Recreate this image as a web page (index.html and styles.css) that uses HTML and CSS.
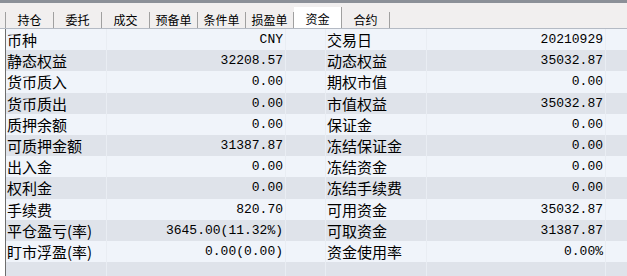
FILE: index.html
```html
<!DOCTYPE html>
<html>
<head>
    <meta charset="UTF-8">
    <link rel="stylesheet" href="styles.css">
</head>
<body>
    <div class="topbar"></div>
    <div class="tabs">
        <div class="tab">持仓</div>
        <div class="tab">委托</div>
        <div class="tab">成交</div>
        <div class="tab">预备单</div>
        <div class="tab">条件单</div>
        <div class="tab">损盈单</div>
        <div class="tab active">资金</div>
        <div class="tab">合约</div>
    </div>

    <div class="grid">
        <div class="row">
            <div class="cell label">币种</div><div class="cell value">CNY</div><div class="cell"></div>
            <div class="cell label">交易日</div><div class="cell value">20210929</div><div class="cell last"></div>
        </div>
        <div class="row">
            <div class="cell label">静态权益</div><div class="cell value">32208.57</div><div class="cell"></div>
            <div class="cell label">动态权益</div><div class="cell value">35032.87</div><div class="cell last"></div>
        </div>
        <div class="row">
            <div class="cell label">货币质入</div><div class="cell value">0.00</div><div class="cell"></div>
            <div class="cell label">期权市值</div><div class="cell value">0.00</div><div class="cell last"></div>
        </div>
        <div class="row">
            <div class="cell label">货币质出</div><div class="cell value">0.00</div><div class="cell"></div>
            <div class="cell label">市值权益</div><div class="cell value">35032.87</div><div class="cell last"></div>
        </div>
        <div class="row">
            <div class="cell label">质押余额</div><div class="cell value">0.00</div><div class="cell"></div>
            <div class="cell label">保证金</div><div class="cell value">0.00</div><div class="cell last"></div>
        </div>
        <div class="row">
            <div class="cell label">可质押金额</div><div class="cell value">31387.87</div><div class="cell"></div>
            <div class="cell label">冻结保证金</div><div class="cell value">0.00</div><div class="cell last"></div>
        </div>
        <div class="row">
            <div class="cell label">出入金</div><div class="cell value">0.00</div><div class="cell"></div>
            <div class="cell label">冻结资金</div><div class="cell value">0.00</div><div class="cell last"></div>
        </div>
        <div class="row">
            <div class="cell label">权利金</div><div class="cell value">0.00</div><div class="cell"></div>
            <div class="cell label">冻结手续费</div><div class="cell value">0.00</div><div class="cell last"></div>
        </div>
        <div class="row">
            <div class="cell label">手续费</div><div class="cell value">820.70</div><div class="cell"></div>
            <div class="cell label">可用资金</div><div class="cell value">35032.87</div><div class="cell last"></div>
        </div>
        <div class="row">
            <div class="cell label">平仓盈亏(率)</div><div class="cell value">3645.00(11.32%)</div><div class="cell"></div>
            <div class="cell label">可取资金</div><div class="cell value">31387.87</div><div class="cell last"></div>
        </div>
        <div class="row">
            <div class="cell label">盯市浮盈(率)</div><div class="cell value">0.00(0.00)</div><div class="cell"></div>
            <div class="cell label">资金使用率</div><div class="cell value">0.00%</div><div class="cell last"></div>
        </div>
        <div class="row">
            <div class="cell label"></div><div class="cell value"></div><div class="cell"></div>
            <div class="cell label"></div><div class="cell value"></div><div class="cell last"></div>
        </div>
    </div>
</body>
</html>
```

FILE: styles.css
```css
body {
    margin: 0;
    width: 627px;
    height: 276px;
    overflow: hidden;
    background-color: #ffffff;
    font-family: "Noto Sans CJK SC", sans-serif;
    color: #000000;
}

.topbar {
    height: 3px;
    background-color: #8b9098;
}

/* 标签栏 */
.tabs {
    display: flex;
    align-items: flex-end;
    height: 25px;
    padding-left: 5px;
    background-color: #f1efef;
    border-bottom: 1px solid #b4bac4;
}

.tab {
    box-sizing: border-box;
    width: 48px;
    height: 16px;
    line-height: 16px;
    font-size: 12px;
    text-align: center;
    border-right: 1px solid #a0a0a0;
}

.tab:first-child {
    border-left: 1px solid #a0a0a0;
    width: 49px;
}

.tab.active {
    height: 21px;
    line-height: 24px;
    background-color: #ffffff;
}

/* 资金表格 */
.grid {
    margin-left: 5px;
    border-left: 1px solid #6d6d6d;
}

.row {
    display: grid;
    grid-template-columns: 101px 179px 40px 101px 179px 1fr;
    height: 21.2px;
    background-color: #f0f4fa;
}

.row:nth-child(even) {
    background-color: #dfe3ea;
}

.cell {
    border-right: 1px solid #e9edf3;
    white-space: nowrap;
    overflow: hidden;
}

.cell.last {
    border-right: none;
}

.label {
    padding-left: 1px;
    font-size: 15px;
    line-height: 21px;
}

.value {
    padding-right: 2px;
    text-align: right;
    font-family: "Liberation Mono", monospace;
    font-size: 13px;
    line-height: 22px;
}
```
